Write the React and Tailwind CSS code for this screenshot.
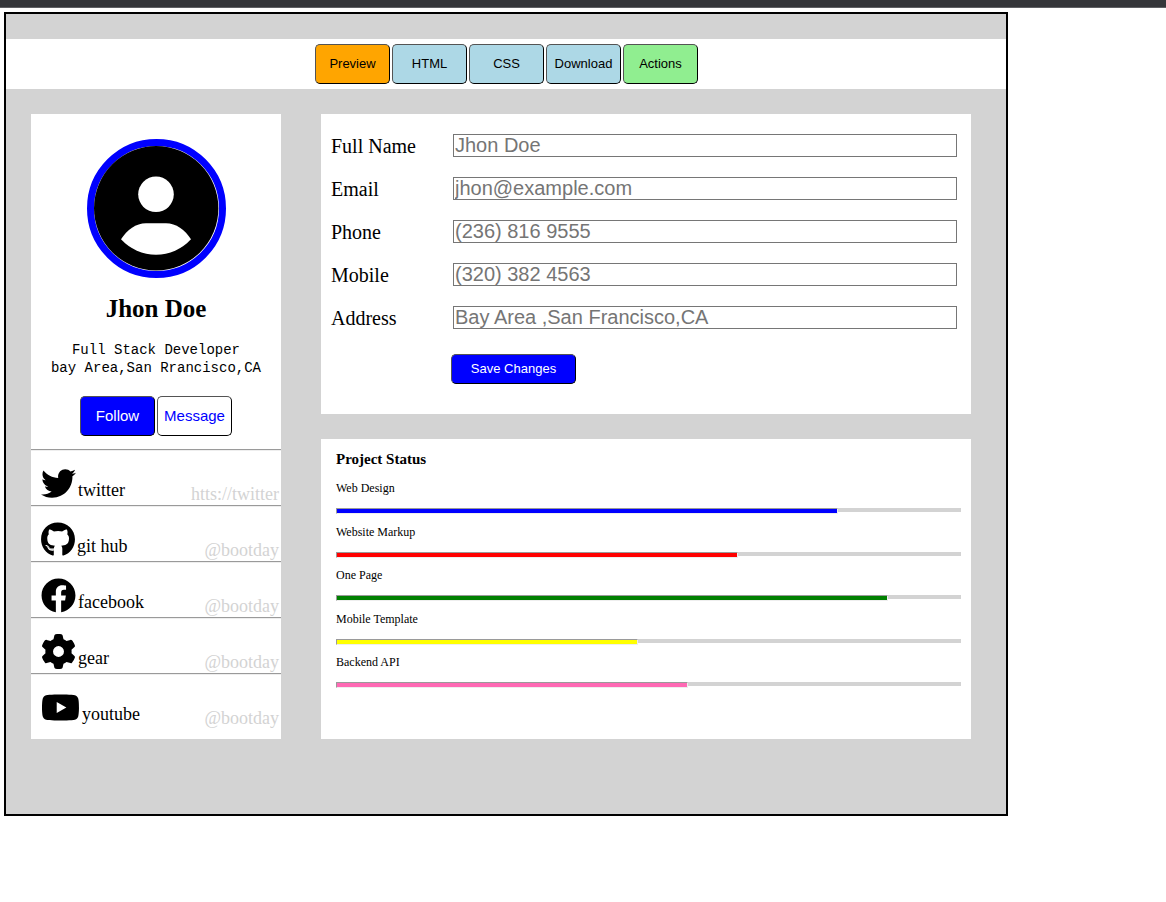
import React from "react";
import { FaTwitter, FaGithub, FaFacebook, FaYoutube } from "react-icons/fa";
import { FaGear } from "react-icons/fa6";

const actions = [
  { label: "Preview", color: "bg-[#ffa500]" },
  { label: "HTML", color: "bg-[#add8e6]" },
  { label: "CSS", color: "bg-[#add8e6]" },
  { label: "Download", color: "bg-[#add8e6]" },
  { label: "Actions", color: "bg-[#90ee90]" },
];

const links = [
  { Icon: FaTwitter, width: "w-[35px]", label: "twitter", handle: "htts://twitter" },
  { Icon: FaGithub, width: "w-[34px]", label: "git hub", handle: "@bootday" },
  { Icon: FaFacebook, width: "w-[35px]", label: "facebook", handle: "@bootday" },
  { Icon: FaGear, width: "w-[35px]", label: "gear", handle: "@bootday" },
  { Icon: FaYoutube, width: "w-[39px]", label: "youtube", handle: "@bootday" },
];

const fields = [
  { id: "name", label: "Full Name", type: "text", placeholder: "Jhon Doe" },
  { id: "email", label: "Email", type: "email", placeholder: "jhon@example.com" },
  { id: "phone", label: "Phone", type: "tel", placeholder: "(236) 816 9555" },
  { id: "mobile", label: "Mobile", type: "tel", placeholder: "(320) 382 4563" },
  { id: "address", label: "Address", type: "text", placeholder: "Bay Area ,San Francisco,CA" },
];

const projects = [
  { label: "Web Design", value: 80, color: "bg-[#0000ff]" },
  { label: "Website Markup", value: 64, color: "bg-[#ff0000]" },
  { label: "One Page", value: 88, color: "bg-[#008000]" },
  { label: "Mobile Template", value: 48, color: "bg-[#ffff00]" },
  { label: "Backend API", value: 56, color: "bg-[#ff69b4]" },
];

function Button({ className, ...props }) {
  return (
    <button
      type="button"
      className={`rounded-[5px] border border-black [border-style:outset] font-['Liberation_Sans',Arial,sans-serif] ${className}`}
      {...props}
    />
  );
}

function Avatar() {
  return (
    <div className="rounded-full border-[7px] border-[#0000ff] bg-white">
      <svg viewBox="0 0 125 125" className="block size-[125px]" aria-hidden="true">
        <circle cx="62.2" cy="62.2" r="62.2" fill="#000" />
        <circle cx="62" cy="48.3" r="17.8" fill="#fff" />
        <path
          d="M27 93.3C33 84 42 77.3 52 77.3H72C82 77.3 91 84 97 93.3A47.5 47.5 0 0 1 27 93.3Z"
          fill="#fff"
        />
      </svg>
    </div>
  );
}

function ProfileCard() {
  return (
    <aside className="w-[250px] shrink-0 bg-white pt-[25px] pb-[10px]">
      <div className="flex flex-col items-center text-center">
        <Avatar />
        <h1 className="mt-4 text-[25px] leading-[30px] font-bold">Jhon Doe</h1>
        <p className="mt-[17px] font-['Liberation_Mono',monospace] text-sm leading-[18px]">
          Full Stack Developer
          <br />
          bay Area,San Rrancisco,CA
        </p>
        <div className="mt-[19px] flex gap-[2px]">
          <Button className="h-10 w-[75px] bg-[#0000ff] text-[15px] text-white">Follow</Button>
          <Button className="h-10 w-[75px] bg-white text-[15px] text-[#0000ff]">Message</Button>
        </div>
      </div>
      <ul className="mt-[13px]">
        {links.map(({ Icon, width, label, handle }) => (
          <li key={label}>
            <hr className="border-t border-b border-t-[#9a9a9a] border-b-[#eeeeee]" />
            <div className="flex h-[54px] items-end justify-between pr-[2px] pb-px pl-[10px] text-lg leading-5">
              <div className="flex items-end gap-[2px] pb-[3px]">
                <Icon className={`h-[35px] ${width}`} aria-hidden="true" />
                <span className="pb-px">{label}</span>
              </div>
              <a href="#" className="text-[#d3d3d3]">
                {handle}
              </a>
            </div>
          </li>
        ))}
      </ul>
    </aside>
  );
}

function DetailsForm() {
  return (
    <form className="min-h-[300px] bg-white pt-5 pr-[14px] pl-[10px]">
      <div className="flex flex-col gap-[19px]">
        {fields.map((f) => (
          <div key={f.id} className="flex items-start text-xl leading-[23px]">
            <label htmlFor={f.id} className="w-[122px] shrink-0 pt-px">
              {f.label}
            </label>
            <input
              id={f.id}
              type={f.type}
              placeholder={f.placeholder}
              className="h-[23px] min-w-0 flex-1 border border-[#767676] bg-white px-px font-['Liberation_Sans',Arial,sans-serif] placeholder:text-[#757575]"
            />
          </div>
        ))}
      </div>
      <Button className="mt-6 ml-[120px] block h-[30px] w-[125px] bg-[#0000ff] text-[13px] text-white">
        Save Changes
      </Button>
    </form>
  );
}

function ProjectStatus() {
  return (
    <section className="min-h-[300px] bg-white pt-[10px] pr-[10px] pl-[15px]">
      <h2 className="text-[15px] leading-5 font-bold">Project Status</h2>
      <ul className="mt-[11px] flex h-[218px] flex-col">
        {projects.map((p) => (
          <li key={p.label} className="flex-1 text-xs leading-4">
            <span>{p.label}</span>
            <div
              role="progressbar"
              aria-label={p.label}
              aria-valuenow={p.value}
              aria-valuemin={0}
              aria-valuemax={100}
              className="mt-3 flex h-1 items-start bg-[#d3d3d3]"
            >
              <div
                className={`box-content h-1 border border-t-[#9a9a9a] border-r-[#eeeeee] border-b-[#eeeeee] border-l-[#9a9a9a] ${p.color}`}
                style={{ width: `${p.value}%` }}
              />
            </div>
          </li>
        ))}
      </ul>
    </section>
  );
}

export default function App() {
  return (
    <div className="min-h-screen bg-white font-['Liberation_Serif','Times_New_Roman',serif] text-black">
      <div className="h-2 border-b border-[#5f6064] bg-[#35363a]" />
      <div className="p-1">
        <div className="w-full max-w-[1004px] border-2 border-black bg-[#d3d3d3] pt-[25px] pb-[75px]">
          <nav className="flex justify-center gap-[2px] bg-white py-[5px] pl-px">
            {actions.map((a) => (
              <Button key={a.label} className={`h-10 w-[75px] text-[13px] ${a.color}`}>
                {a.label}
              </Button>
            ))}
          </nav>
          <main className="flex items-start gap-10 pt-[25px] pr-[35px] pl-[25px]">
            <ProfileCard />
            <div className="flex min-w-0 flex-1 flex-col gap-[25px]">
              <DetailsForm />
              <ProjectStatus />
            </div>
          </main>
        </div>
      </div>
    </div>
  );
}
